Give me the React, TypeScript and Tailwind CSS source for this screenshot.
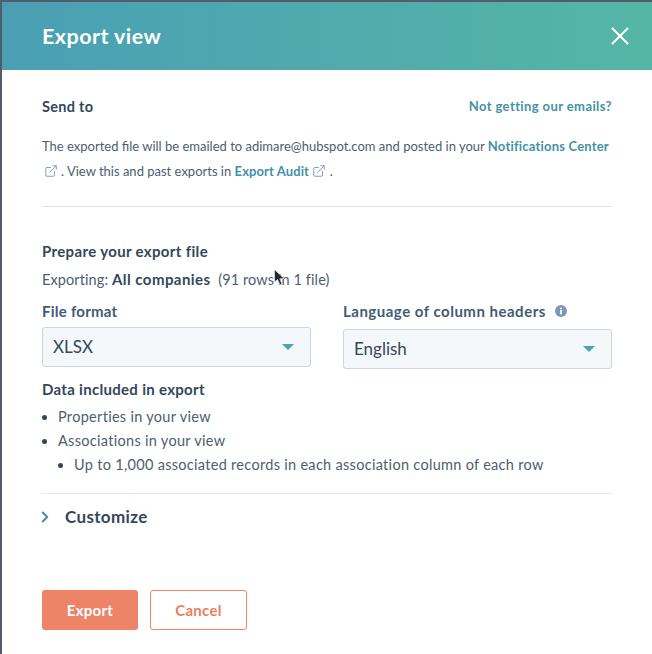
import { X, ChevronRight, ExternalLink } from 'lucide-react'

function Select({ value, className }: { value: string; className: string }) {
  return (
    <div className={`flex h-10 items-center justify-between rounded-[3px] border border-[#cbd6e2] bg-[#f5f8fa] pl-2.5 pr-4 text-[17px] text-[#33475b] ${className}`}>
      <span>{value}</span>
      <span className="h-0 w-0 border-x-[6px] border-t-[6px] border-x-transparent border-t-[#4ba3b5]" />
    </div>
  )
}

export default function App() {
  return (
    <div className="relative h-[654px] w-[652px] overflow-hidden bg-[#515c6c] pl-0.5 pt-0.5 font-['Lato',sans-serif] text-[#33475b]">
      <div className="flex h-[652px] flex-col bg-white">
        {/* Header */}
        <div className="flex h-[68px] shrink-0 items-center justify-between bg-gradient-to-r from-[#4a9fb4] to-[#55b6a5] pl-10 pr-[17px]">
          <h1 className="text-[21.5px] font-bold tracking-[0.45px] text-white">Export view</h1>
          <X className="h-[30px] w-[30px] text-white" strokeWidth={1.5} />
        </div>

        <div className="flex flex-1 flex-col px-10">
          {/* Send to */}
          <div className="mt-[26px] flex items-center justify-between">
            <h2 className="text-[14.5px] font-bold tracking-[0.3px]">Send to</h2>
            <a className="text-[13px] font-bold tracking-[0.4px] text-[#4491a6]">Not getting our emails?</a>
          </div>
          <p className="mt-4 whitespace-nowrap text-[13px] leading-[25px] text-[#4c5e70]">
            The exported file will be emailed to adimare@hubspot.com and posted in your{' '}
            <a className="font-bold tracking-[0.2px] text-[#4491a6]">Notifications Center</a>
            <br />
            <ExternalLink className="mb-[3px] ml-[2px] mr-[3px] inline h-[14px] w-[14px] text-[#7c98b6]" strokeWidth={1.6} />. View this and past exports in{' '}
            <a className="font-bold tracking-[0.1px] text-[#4491a6]">Export Audit</a>{' '}
            <ExternalLink className="mb-[3px] inline h-[14px] w-[14px] text-[#7c98b6]" strokeWidth={1.6} /> .
          </p>

          <div className="mt-[22px] h-px bg-[#dfe3eb]" />

          {/* Prepare */}
          <h2 className="mt-[35px] text-[15px] font-bold leading-[18px] tracking-[0.35px]">Prepare your export file</h2>
          <p className="mt-2.5 text-[14.5px] leading-[18px] tracking-[0.1px] text-[#4c5e70]">
            Exporting: <span className="text-[15px] font-bold tracking-[0.45px] text-[#33475b]">All companies</span>&nbsp; (91 rows in 1 file)
          </p>

          <div className="mt-[13px] grid grid-cols-[269px_269px] gap-x-8">
            <div>
              <label className="block text-[15px] font-bold leading-[18px] tracking-[0.25px] text-[#425b76]">File format</label>
              <Select value="XLSX" className="mt-[7px]" />
            </div>
            <div>
              <label className="flex items-center gap-[9px] text-[15px] font-bold leading-[18px] tracking-[0.5px] text-[#425b76]">
                Language of column headers
                <svg className="h-3 w-3" viewBox="0 0 12 12">
                  <circle cx="6" cy="6" r="6" fill="#7c98b6" />
                  <rect x="5.1" y="5" width="1.8" height="4.4" fill="#fff" />
                  <circle cx="6" cy="3.4" r="1" fill="#fff" />
                </svg>
              </label>
              <Select value="English" className="mt-[9px]" />
            </div>
          </div>

          <h2 className="mt-[11px] text-[15px] font-bold leading-[18px] tracking-[0.3px]">Data included in export</h2>
          <ul className="mt-[7px] list-disc pl-4 text-[14.5px] leading-6 tracking-[0.3px] text-[#4c5e70] marker:text-[#33475b]">
            <li>Properties in your view</li>
            <li>Associations in your view
              <ul className="list-disc pl-4">
                <li>Up to 1,000 associated records in each association column of each row</li>
              </ul>
            </li>
          </ul>

          <div className="mt-4 h-px bg-[#e5e8ed]" />

          {/* Customize */}
          <div className="mt-2.5 flex items-center">
            <ChevronRight className="-ml-1.5 h-[18px] w-[18px] text-[#3f8ea3]" strokeWidth={2.6} />
            <span className="ml-[11px] text-[17px] font-bold tracking-[0.35px]">Customize</span>
          </div>

          {/* Footer */}
          <div className="mt-[61px] flex gap-3">
            <button className="flex h-10 w-[96px] items-center justify-center rounded-[3px] bg-[#ee8467] text-[15px] font-bold tracking-[0.25px] text-white">Export</button>
            <button className="flex h-10 w-[97px] items-center justify-center rounded-[3px] border border-[#ee8467] bg-white text-[15px] font-bold tracking-[0.25px] text-[#ea7f62]">Cancel</button>
          </div>
        </div>
      </div>

      {/* Mouse pointer caught in the recording */}
      <svg className="absolute left-[274px] top-[269px] h-[18px] w-[12px]" viewBox="0 0 12 18">
        <path d="M0.5 0.5 L0.5 13 L3.5 10.5 L6 16 L8 15 L5.8 9.8 L10 9.5 Z" fill="#1f2933" stroke="#ffffff" strokeWidth="0.6" />
      </svg>
    </div>
  )
}
